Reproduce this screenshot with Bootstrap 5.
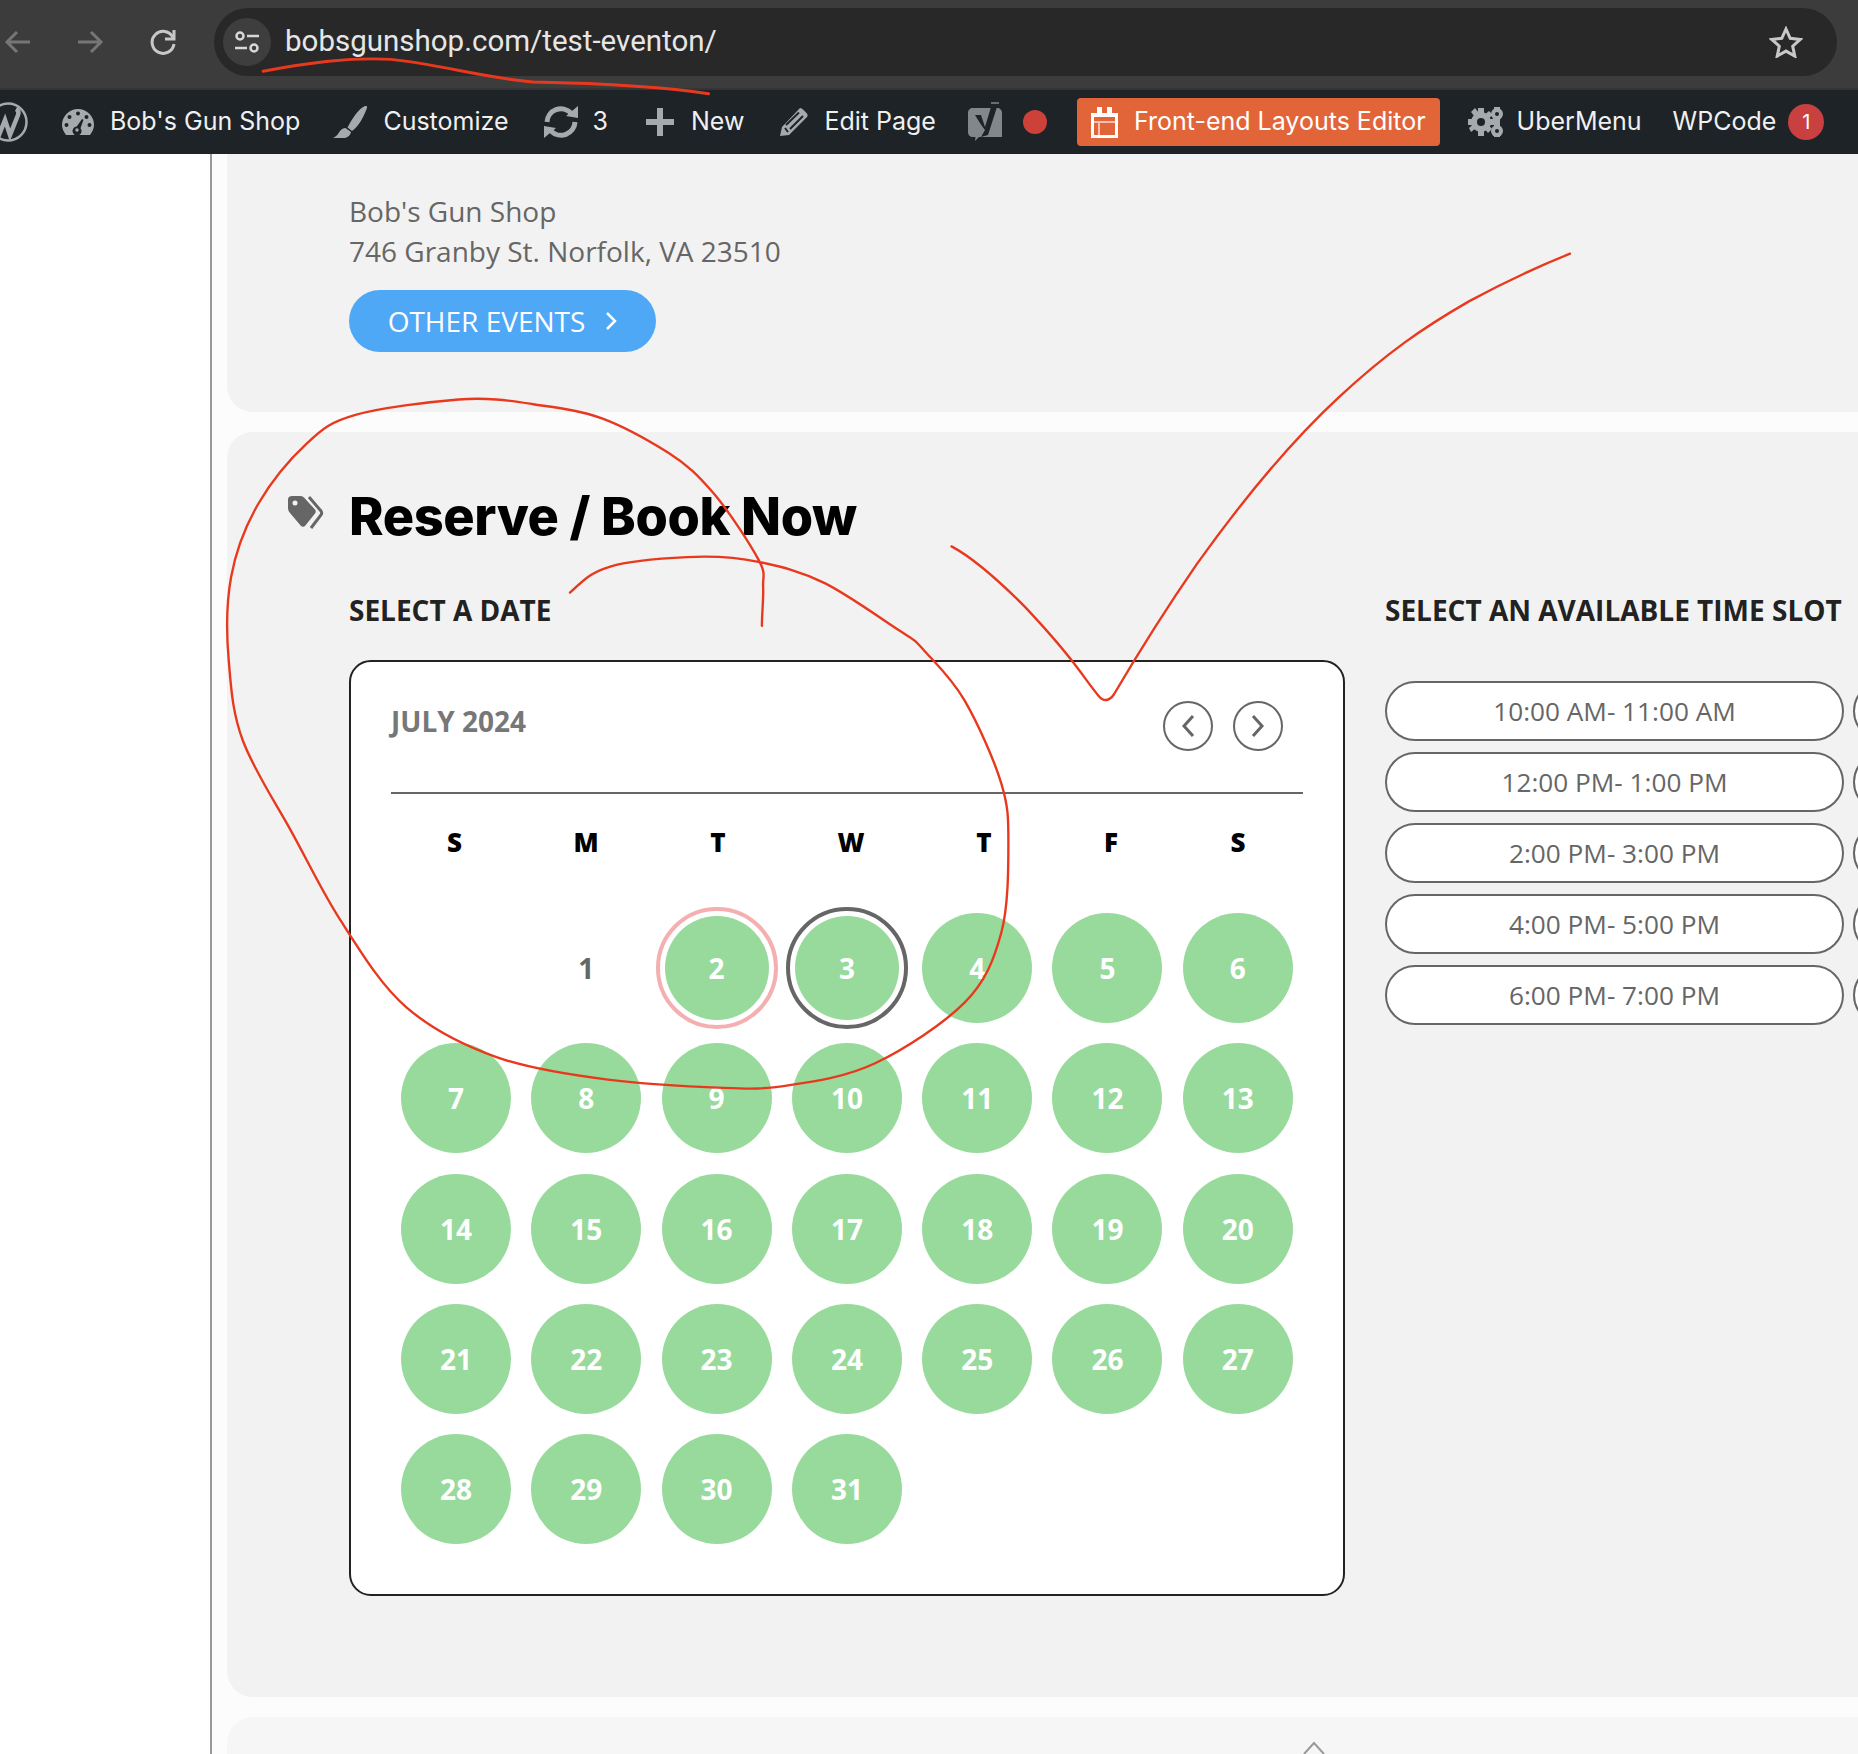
<!doctype html>
<html lang="en">
<head>
<meta charset="utf-8">
<title>Reserve / Book Now</title>
<link href="https://cdn.jsdelivr.net/npm/bootstrap@5.3.0/dist/css/bootstrap.min.css" rel="stylesheet">
<style>
html,body{margin:0;height:1754px;overflow:hidden;background:#fff}
body{position:relative;font-family:"Open Sans","Noto Sans",sans-serif;color:#666}
.chrome-bar{height:90px;background:#3c3c3c;border-bottom:2px solid #343434;padding-top:8px}
.chrome-icon{flex:none;display:block}
.omni{flex:none;width:1623px;height:68px;margin-left:37px;background:#282828;border-radius:34px;padding:0 34px 0 9px;color:#e6e6e6;font:29.500px/1 Roboto,sans-serif}
.omni-info{width:48px;height:48px;border-radius:50%;background:#3e3e3e;margin-right:14px}
.admin-bar{height:64px;background:#1d2327;color:#f0f0f1;font-family:Inter,"Open Sans",sans-serif;font-size:25px;white-space:nowrap}
.admin-bar svg{flex:none;display:block}
.abar-orange{background:#e2653a;color:#fff;height:48px;border-radius:4px;padding:0 14px;margin-left:30px;gap:16px}
.abar-count{width:36px;height:36px;background:#c84040;border-radius:50%;font-size:20px;margin-left:12px;color:#fff}
.page-wrap{height:1600px;overflow:hidden}
.left-gutter{flex:none;width:212px;background:#fff;border-right:2px solid #999}
.main-area{flex:1 1 auto;background:#fcfcfc;padding-left:15px;min-width:0;overflow:hidden}
.panel-a{height:258px;background:#f2f2f2;border-bottom-left-radius:26px;padding:37px 0 0 122px;font-size:28px;line-height:40px}
.pill-blue{width:307px;height:62px;margin-top:19px;border-radius:31px;background:#4fa8f5;color:#fff;font-size:28px;line-height:1;gap:20px;text-decoration:none}
.panel-b{height:1265px;margin-top:20px;background:#f2f2f2;border-top-left-radius:26px;border-bottom-left-radius:26px;padding:49px 0 0 61px}
.panel-c{height:120px;margin-top:20px;background:#f6f6f6;border-top-left-radius:26px;padding-top:17px;padding-left:1076px}
.tag-ico{flex:none;width:61px;padding-top:14px}
.book-title{font:800 52.300px/70px Inter,"Liberation Sans",sans-serif;color:#000;letter-spacing:-.4px;margin:0}
.booking-row{padding-left:61px;margin-top:39px;gap:40px;width:1620px}
.col-date{flex:none;width:996px}
.col-slots{flex:none;width:500px}
.step-label{font-size:28px;font-weight:700;line-height:40px;color:#222;margin:0;white-space:nowrap}
.cal-box{height:936px;margin-top:30px;background:#fff;border:2px solid #222;border-radius:22px;padding:39px 0 0 40px}
.cal-head{height:93px;width:912px;border-bottom:2px solid #666}
.cal-month{font-size:28px;font-weight:700;line-height:40px;color:#777;margin:0}
.cal-nav{gap:20px;margin:0 20px 0 0}
.cal-arrow{width:50px;height:50px;border:2px solid #666;border-radius:50%;background:#fff;padding:0}
.week-grid{display:grid;grid-template-columns:127px 136px 128px 138px 128px 126px 128px;width:912px;height:96px;padding-top:25px;font-size:26px;font-weight:800;line-height:46px;color:#000;text-align:center}
.day-grid{display:grid;grid-template-columns:repeat(7,110px);grid-auto-rows:110px;gap:20.300px;margin:23px 0 0 10px;width:900px}
.day-cell{position:relative;display:flex;align-items:center;justify-content:center;border-radius:50%;background:#98da9c;color:#fff;font-size:28px;font-weight:700}
.day-plain{background:none;color:#666}
.day-empty{background:none}
.day-ring{background-clip:content-box;padding:3px}
.day-ring::after{content:"";position:absolute;inset:-6px;border:4px solid #f4b0b0;border-radius:50%}
.day-ring-dark::after{border-color:#666}
.slot-grid{display:grid;grid-template-columns:459px 459px;gap:11px 9px;margin-top:51px;width:927px}
.slot-pill{height:60px;border:2px solid #666;border-radius:30px;background:#fff;color:#666;font-size:26.200px;line-height:1;padding:0}
.mark-layer{position:absolute;left:0;top:0;width:1858px;height:1754px;pointer-events:none;z-index:5}
</style>
</head>
<body>
<header class="chrome-bar d-flex align-items-start">
  <div class="d-flex align-items-center" style="height:68px">
    <svg class="chrome-icon" width="27" height="26" viewBox="0 0 27 26" style="margin-left:4px" fill="none" stroke="#767676" stroke-width="3"><path d="M26 13H3M13 3 3 13l10 10"/></svg>
    <svg class="chrome-icon" width="27" height="26" viewBox="0 0 27 26" style="margin-left:46px" fill="none" stroke="#767676" stroke-width="3"><path d="M1 13h23M14 3l10 10-10 10"/></svg>
    <svg class="chrome-icon" width="28" height="28" viewBox="0 0 28 28" style="margin-left:45px" fill="none" stroke="#c8c8c8" stroke-width="3"><path d="M24 9.500A11 11 0 1 0 25 16"/><path d="M25 2v9h-9" /></svg>
  </div>
  <div class="omni d-flex align-items-center">
    <div class="omni-info d-flex align-items-center justify-content-center">
      <svg width="26" height="24" viewBox="0 0 26 24" fill="none" stroke="#d8d8d8" stroke-width="2.500"><circle cx="6" cy="6" r="3.500"/><path d="M13 6h12M1 18h12"/><circle cx="20" cy="18" r="3.500"/></svg>
    </div>
    <span>bobsgunshop.com/test-eventon/</span>
    <svg class="ms-auto" width="34" height="32" viewBox="0 0 34 32" fill="none" stroke="#c8c8c8" stroke-width="3"><path d="m17 3 4.200 9.300 10 1.100-7.500 6.800 2.100 9.900L17 25.100l-8.800 5 2.100-9.900-7.500-6.800 10-1.100z"/></svg>
  </div>
</header>
<nav class="admin-bar d-flex align-items-center">
  <svg width="28" height="42" viewBox="0 0 28 42" fill="none"><circle cx="8" cy="21" r="18.500" stroke="#a7aaad" stroke-width="2.500"/><path d="M-7 10-1 34l6-15 5 15 8-20c1-3 0-5-2-6" stroke="#a7aaad" stroke-width="4.500"/></svg>
  <svg width="32" height="26" viewBox="0 0 32 26" style="margin-left:34px"><path fill="#a7aaad" d="M4 26C2 23 0 20 0 16A16 16 0 0 1 32 16c0 4-2 7-4 10z"/><g fill="#1d2327"><circle cx="16" cy="4.500" r="2"/><circle cx="7.500" cy="8" r="2"/><circle cx="24.500" cy="8" r="2"/><circle cx="4.500" cy="16" r="2"/><circle cx="27.500" cy="16" r="2"/><path d="m20 10 1.500.7-3 8.500a4.500 4.500 0 1 1-3.800-1.600z"/></g><circle cx="15" cy="21" r="1.700" fill="#a7aaad"/></svg>
  <span class="ms-3">Bob's Gun Shop</span>
  <svg width="34" height="32" viewBox="0 0 34 32" style="margin-left:33px"><path fill="#a7aaad" d="M32 0c1.500-.5 2.500.5 2 2C31 10 26 20 19 25l-4.500-3.500C19 13 26 2 32 0zM12.500 22l5.500 4c-1 4-4 6-8 6H0c4-2 5-4 7-7 1.500-2 3.500-3 5.500-3z"/></svg>
  <span class="ms-3">Customize</span>
  <svg width="38" height="34" viewBox="0 0 38 34" style="margin-left:33px" fill="none" stroke="#a7aaad" stroke-width="5"><path d="M5 17A14 14 0 0 1 29 8M33 17A14 14 0 0 1 9 26"/><path fill="#a7aaad" stroke="none" d="m24 11 12 2V1zM14 23 2 21v12z"/></svg>
  <span style="margin-left:13px">3</span>
  <svg width="30" height="30" viewBox="0 0 30 30" style="margin-left:37px"><path fill="#a7aaad" d="M12 1h6v11h11v6H18v11h-6V18H1v-6h11z"/></svg>
  <span class="ms-3">New</span>
  <svg width="28" height="28" viewBox="0 0 28 28" style="margin-left:36px"><path fill="#a7aaad" d="M20 0c1 0 2 .5 3 1.500l3.500 3.500c1.500 1.500 1.500 3 0 4.500L9 27 0 28l2-9z"/><path fill="none" stroke="#1d2327" stroke-width="2" d="M6 17 19 4.500M10 21 23 8M5 20l3 4"/></svg>
  <span class="ms-3">Edit Page</span>
  <svg width="34" height="40" viewBox="0 0 34 40" style="margin-left:32px"><path fill="#84878a" d="M5 6h24c3 0 5 2 5 5v24H11l-4 4 .5-4H5c-3 0-5-2-5-5V11c0-3 2-5 5-5z"/><path fill="#1d2327" d="M7 13h6l4 12L23 5h6L20 33l-7 2 4-7c-4-5-7-10-10-15z"/><path fill="none" stroke="#84878a" stroke-width="1.500" d="M23 1h8"/></svg>
  <span class="rounded-circle" style="width:24px;height:24px;margin-left:21px;background:#cc4238"></span>
  <span class="abar-orange d-flex align-items-center">
    <svg width="27" height="31" viewBox="0 0 27 31"><path fill="#fff" d="M6 0h5v6h5V0h5v6h6v25H0V6h6zM3 10v18h21V10z"/><path fill="#f3c1ae" d="M3 14h21v2H9v12H7V16H3z"/></svg>
    <span>Front-end Layouts Editor</span>
  </span>
  <svg width="36" height="30" viewBox="0 0 36 30" style="margin-left:28px"><g fill="#a7aaad"><circle cx="13" cy="15" r="10"/><circle cx="29" cy="7" r="6"/><circle cx="29" cy="24" r="6"/><path d="M10 1h6v28h-6zM0 12h26v6H0zM3 5l4-4 17 21-4 4zM3 25l-2-4L21 4l4 4zM26 0h6v30h-6z"/></g><g fill="#1d2327"><circle cx="13" cy="15" r="4"/><circle cx="29" cy="7" r="2"/><circle cx="29" cy="24" r="2"/></g></svg>
  <span style="margin-left:13px">UberMenu</span>
  <span style="margin-left:31px">WPCode</span>
  <span class="abar-count d-flex align-items-center justify-content-center">1</span>
</nav>
<div class="page-wrap d-flex">
  <div class="left-gutter"></div>
  <main class="main-area">
    <section class="panel-a">
      <div>Bob's Gun Shop</div>
      <div>746 Granby St. Norfolk, VA 23510</div>
      <a class="pill-blue d-flex align-items-center justify-content-center" href="#">OTHER EVENTS
        <svg width="12" height="18" viewBox="0 0 12 18" fill="none" stroke="#fff" stroke-width="2.500"><path d="m2 1 8 8-8 8"/></svg>
      </a>
    </section>
    <section class="panel-b">
      <div class="d-flex">
        <div class="tag-ico">
          <svg width="36" height="34" viewBox="0 0 36 34"><path fill="#666" d="M4 1h9c1 0 2 .5 3 1.500l11 12c1 1 1 3 0 4L17 31c-1 1-3 1-4 0L2 18C1 17 0 15 0 13V4c0-2 2-3 4-3z"/><circle cx="7" cy="8" r="2.500" fill="#f2f2f2"/><path fill="none" stroke="#666" stroke-width="3" d="m21 2 12 14c1 1.500 1 2.500 0 4L23 33"/></svg>
        </div>
        <h2 class="book-title">Reserve / Book Now</h2>
      </div>
      <div class="booking-row d-flex">
        <div class="col-date">
          <p class="step-label">SELECT A DATE</p>
          <div class="cal-box">
            <div class="cal-head d-flex justify-content-between align-items-start">
              <p class="cal-month">JULY 2024</p>
              <div class="cal-nav d-flex">
                <button class="cal-arrow d-flex align-items-center justify-content-center" type="button" aria-label="Previous"><svg width="14" height="24" viewBox="0 0 14 24" fill="none" stroke="#666" stroke-width="3"><path d="M12 2 3 12l9 10"/></svg></button>
                <button class="cal-arrow d-flex align-items-center justify-content-center" type="button" aria-label="Next"><svg width="14" height="24" viewBox="0 0 14 24" fill="none" stroke="#666" stroke-width="3"><path d="m2 2 9 10-9 10"/></svg></button>
              </div>
            </div>
            <div class="week-grid"><span>S</span><span>M</span><span>T</span><span>W</span><span>T</span><span>F</span><span>S</span></div>
            <div class="day-grid">
              <div class="day-empty"></div>
              <div class="day-cell day-plain">1</div>
              <div class="day-cell day-ring">2</div>
              <div class="day-cell day-ring day-ring-dark">3</div>
              <div class="day-cell">4</div><div class="day-cell">5</div><div class="day-cell">6</div>
              <div class="day-cell">7</div><div class="day-cell">8</div><div class="day-cell">9</div><div class="day-cell">10</div><div class="day-cell">11</div><div class="day-cell">12</div><div class="day-cell">13</div>
              <div class="day-cell">14</div><div class="day-cell">15</div><div class="day-cell">16</div><div class="day-cell">17</div><div class="day-cell">18</div><div class="day-cell">19</div><div class="day-cell">20</div>
              <div class="day-cell">21</div><div class="day-cell">22</div><div class="day-cell">23</div><div class="day-cell">24</div><div class="day-cell">25</div><div class="day-cell">26</div><div class="day-cell">27</div>
              <div class="day-cell">28</div><div class="day-cell">29</div><div class="day-cell">30</div><div class="day-cell">31</div>
            </div>
          </div>
        </div>
        <div class="col-slots">
          <p class="step-label">SELECT AN AVAILABLE TIME SLOT</p>
          <div class="slot-grid">
            <button class="slot-pill" type="button">10:00 AM- 11:00 AM</button><button class="slot-pill" type="button"></button>
            <button class="slot-pill" type="button">12:00 PM- 1:00 PM</button><button class="slot-pill" type="button"></button>
            <button class="slot-pill" type="button">2:00 PM- 3:00 PM</button><button class="slot-pill" type="button"></button>
            <button class="slot-pill" type="button">4:00 PM- 5:00 PM</button><button class="slot-pill" type="button"></button>
            <button class="slot-pill" type="button">6:00 PM- 7:00 PM</button><button class="slot-pill" type="button"></button>
          </div>
        </div>
      </div>
    </section>
    <section class="panel-c">
      <svg width="22" height="14" viewBox="0 0 22 14" fill="none" stroke="#999" stroke-width="2"><path d="M1 13 11 2l10 11"/></svg>
    </section>
  </main>
</div>
<svg class="mark-layer" viewBox="0 0 1568 1480" fill="none" stroke="#e8391e" stroke-width="2" stroke-linecap="round" stroke-linejoin="round">
  <path stroke-width="2.500" d="M222 60C260 53 295 48 330 50C370 54 410 66 450 69C500 70 555 72 598 79"/>
  <path d="M643 528C643 517 644.500 504 644 495S647 485 640 472S615 431 602 416S580 392 564 382S527 360 508 353S470 344 450 341S412 335 387 337S321 344 300 350S273 361 259 374S229 406 218 425S199 465 195 487S191 534 193 557S196 601 205 625S231 675 245 700S271 751 287 776S321 831 343 850S391 882 419 892S481 907 513 911S586 917 611 918S643 919 664 916S714 909 739 897S796 864 814 846S839 809 845 787S851 732 851 711S851 681 845 661S825 610 814 591S789 559 780 549S773 541 759 532S716 502 696 492S659 478 640 474S601 469 580 470S531 473 515 478S495 487 481 500"/>
  <path d="M803 461C820 470 840 487 865 512C880 528 895 545 905 558C915 571 922 581 927 587C931 592 936 592 940 586C960 552 990 505 1010 476C1050 420 1090 372 1130 335C1170 298 1200 277 1240 254C1275 235 1300 224 1325 214"/>
</svg>
<script src="https://cdn.jsdelivr.net/npm/bootstrap@5.3.0/dist/js/bootstrap.bundle.min.js"></script>
</body>
</html>
